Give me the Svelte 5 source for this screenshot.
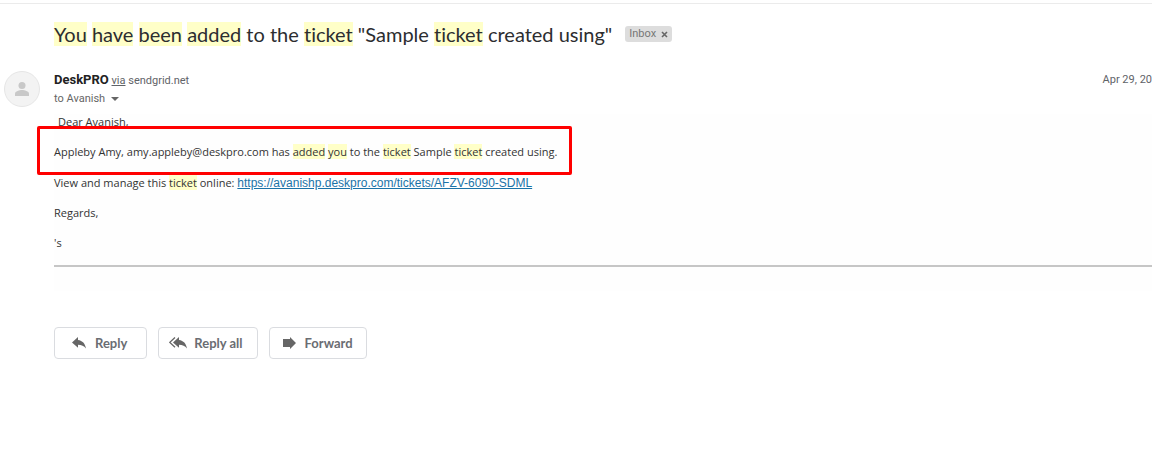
<script>
  const actions = [
    { label: 'Reply', icon: 'reply' },
    { label: 'Reply all', icon: 'reply-all' },
    { label: 'Forward', icon: 'forward' }
  ];
</script>

<main>
  <h1>
    <span><mark>You</mark> <mark>have</mark> <mark>been</mark> <mark>added</mark> to the <mark>ticket</mark> "Sample <mark>ticket</mark> created using"</span>
    <span class="label">Inbox
      <button aria-label="Remove label Inbox">
        <svg width="7" height="7" viewBox="0 0 7 7"><path d="M1 1l5 5M6 1L1 6" stroke="#666" stroke-width="1.6" /></svg>
      </button>
    </span>
  </h1>

  <article>
    <div class="avatar">
      <svg width="16" height="16" viewBox="0 0 16 16" fill="#c8c8c8">
        <circle cx="8" cy="4.5" r="3.5" />
        <path d="M1 15v-2.500c0-2.300 4.600-3.500 7-3.500s7 1.200 7 3.500V15z" />
      </svg>
    </div>
    <div class="message">
      <header>
        <div class="from"><strong>DeskPRO</strong> <a href="#via">via</a> sendgrid.net</div>
        <time datetime="04-29">Apr 29, 20</time>
      </header>
      <button class="to">to Avanish
        <svg width="8" height="4" viewBox="0 0 8 4"><path d="M0 0h8L4 4z" fill="#666" /></svg>
      </button>

      <div class="body">
        <p class="greeting">Dear Avanish,</p>
        <p class="boxed">Appleby Amy, amy.appleby@deskpro.com has <mark>added</mark> <mark>you</mark> to the <mark>ticket</mark> Sample <mark>ticket</mark> created using.</p>
        <p>View and manage this <mark>ticket</mark> online: <a href="https://avanishp.deskpro.com/tickets/AFZV-6090-SDML">https://avanishp.deskpro.com/tickets/AFZV-6090-SDML</a></p>
        <p>Regards,</p>
        <p>'s</p>
        <hr />
      </div>

      <div class="actions">
        {#each actions as { label, icon }}
          <button class={icon}>
            {#if icon === 'reply'}
              <svg width="14" height="12" viewBox="0 0 14 12" fill="#666"><path d="M6 0v3c4.500.600 7.200 3.500 8 8.500C12 8.900 9.500 7.700 6 7.700v3L0 5.400z" /></svg>
            {:else if icon === 'reply-all'}
              <svg width="18" height="12" viewBox="0 0 18 12" fill="#666"><path d="M10 0v3c4.500.600 7.200 3.500 8 8.500-2-2.600-4.500-3.800-8-3.800v3L4 5.400z" /><path d="M6 .5L.8 5.400 6 10.300" fill="none" stroke="#666" stroke-width="1.300" /></svg>
            {:else}
              <svg width="13" height="12" viewBox="0 0 13 12" fill="#666"><path d="M0 2h7V0l6 6-6 6v-2H0z" /></svg>
            {/if}
            {label}
          </button>
        {/each}
      </div>
    </div>
  </article>
</main>

<style>
  :global(body) { margin: 0; background: #fff; }
  main {
    border-top: 1px solid #ebebeb;
    margin-top: 3px;
    overflow: hidden;
    font-family: Roboto, sans-serif;
    color: #222;
  }
  button { font: inherit; color: inherit; background: none; border: 0; padding: 0; cursor: pointer; }
  mark { background: #ffffc8; color: inherit; }
  h1 {
    display: flex;
    align-items: center;
    gap: 13px;
    margin: 18px 0 0 54px;
    font: 400 20px/24px Lato, sans-serif;
    font-variant-ligatures: none;
    color: #2c2d30;
  }
  .label {
    display: flex;
    align-items: center;
    gap: 5px;
    height: 16px;
    padding: 0 4px;
    border-radius: 3px;
    background: #ddd;
    color: #777;
    font: 11px/16px Roboto, sans-serif;
  }
  .label button { display: flex; }
  article { display: flex; gap: 14px; padding: 25px 0 0 4px; }
  .avatar {
    flex: none;
    display: grid;
    place-items: center;
    width: 34px;
    height: 34px;
    border: 1px solid #e6e6e6;
    border-radius: 50%;
    background: #f3f3f3;
  }
  .message { flex: 1; min-width: 0; }
  header { display: flex; justify-content: space-between; line-height: 18px; font-size: 11px; color: #5f6368; }
  header strong { font-size: 13px; color: #222; }
  header a { color: inherit; }
  .to { display: flex; align-items: center; gap: 6px; font-size: 11px; line-height: 18px; color: #666; }
  .body { margin-top: 6px; padding-bottom: 24px; background: #fefefe; font: 11px/16px "Open Sans", sans-serif; color: #333; }
  .body p { margin: 0 0 14px; }
  .body .greeting { padding-left: 4px; }
  .body a { font: 12px/16px "Liberation Sans", sans-serif; color: #1a73a8; }
  .body .boxed { position: relative; width: fit-content; margin-bottom: 15px; }
  .boxed::after {
    content: "";
    position: absolute;
    inset: -18px -15px -15px -17px;
    border: 3px solid #f00;
    border-radius: 2px;
    pointer-events: none;
  }
  hr { margin: 0; border: 0; border-top: 2px solid #c6c6c6; }
  .actions { display: flex; gap: 11px; margin-top: 36px; }
  .actions button {
    display: flex;
    align-items: center;
    gap: 9px;
    height: 32px;
    padding: 0 13px;
    border: 1px solid #dadce0;
    border-radius: 4px;
    background: #fff;
    color: #6a6d72;
    font: 700 13px/16px Lato, sans-serif;
  }
  .actions .reply { padding: 0 19px 0 17px; }
  .actions .reply-all { gap: 7px; padding: 0 14px 0 10px; }
</style>
